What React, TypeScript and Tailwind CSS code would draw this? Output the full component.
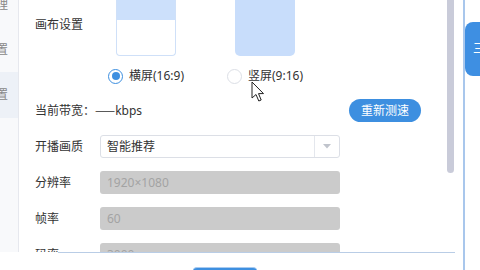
const FONT = "font-['Noto_Sans','Noto_Sans_CJK_SC',sans-serif]";

function Radio({ checked, label }: { checked?: boolean; label: string }) {
  return (
    <div className="flex h-[16px] items-center justify-center gap-[6px] whitespace-nowrap">
      {checked ? (
        <span className="flex h-[15px] w-[15px] shrink-0 items-center justify-center rounded-full border border-[#3d8fe0] bg-white">
          <span className="h-[8px] w-[8px] rounded-full bg-[#3d8fe0]" />
        </span>
      ) : (
        <span className="h-[15px] w-[15px] shrink-0 rounded-full border border-[#dcdfe6] bg-white" />
      )}
      <span className="text-[12px] leading-[16px] text-[#333]">{label}</span>
    </div>
  );
}

function FieldRow({ label, children }: { label: string; children: React.ReactNode }) {
  return (
    <div className="mt-[13px] flex h-[23px] shrink-0 items-center">
      <span className="w-[65px] shrink-0 text-[12px] text-[#333]">{label}</span>
      {children}
    </div>
  );
}

function DisabledInput({ value }: { value: string }) {
  return (
    <div className="flex h-[23px] w-[240px] items-center rounded-[3px] bg-[#cbcbcb] px-[7px] text-[12px] text-[#a3a3a3]">
      {value}
    </div>
  );
}

function Cursor() {
  return (
    <svg
      className="pointer-events-none absolute left-[251px] top-[81px]"
      width="14"
      height="22"
      viewBox="0 0 14 22"
    >
      <path
        d="M1 1 L1 17 L5 13.5 L7.8 20 L10.2 19 L7.5 12.6 L12.5 12.6 Z"
        fill="#fff"
        stroke="#222"
        strokeWidth="1"
        strokeLinejoin="round"
      />
    </svg>
  );
}

export default function App() {
  return (
    <div className={`relative flex h-[270px] w-[480px] overflow-hidden bg-white ${FONT}`}>
      {/* 左侧 + 主体 */}
      <div className="flex w-[455px] shrink-0 flex-col">
        <div className="flex h-[252px] shrink-0">
          {/* 侧栏（被裁切） */}
          <div className="flex w-[19px] shrink-0 flex-col overflow-hidden border-r border-[#e6e8ee] bg-[#f8f9fb] text-[12px] text-[#888]">
            <div className="-mt-[18px] flex h-[45px] items-center justify-end whitespace-nowrap pr-[10px]">推流管理</div>
            <div className="flex h-[45px] items-center justify-end whitespace-nowrap pr-[10px]">基础设置</div>
            <div className="flex h-[46px] items-center justify-end whitespace-nowrap bg-[#edf1f7] pr-[10px]">画面设置</div>
          </div>

          {/* 主体内容 */}
          <div className="flex flex-1 flex-col overflow-hidden pl-[16px] pr-[18px]">
            {/* 画布设置 */}
            <div className="flex shrink-0">
              <span className="w-[81px] shrink-0 pt-[17px] text-[12px] leading-[16px] text-[#333]">画布设置</span>
              <div className="flex gap-[59px]">
                <div className="flex w-[60px] flex-col">
                  <div className="flex h-[56px] flex-col overflow-hidden rounded-b-[4px] border border-t-0 border-[#cfe0f8] bg-white">
                    <div className="h-[20px] bg-[#cce0fb]" />
                  </div>
                  <div className="mt-[12px]">
                    <Radio checked label="横屏(16:9)" />
                  </div>
                </div>
                <div className="flex w-[60px] flex-col">
                  <div className="h-[56px] rounded-b-[5px] bg-[#c8ddfb]" />
                  <div className="mt-[12px]">
                    <Radio label="竖屏(9:16)" />
                  </div>
                </div>
              </div>
            </div>

            {/* 当前带宽 */}
            <div className="mt-[15px] flex h-[23px] shrink-0 items-center justify-between">
              <span className="whitespace-nowrap text-[12px] text-[#333]">
                当前带宽：<span className="font-['Noto_Sans_CJK_SC',sans-serif]">——</span>kbps
              </span>
              <button className="flex h-[23px] w-[72px] items-center justify-center rounded-full bg-[#3d8fe0] text-[12px] text-white">
                重新测速
              </button>
            </div>

            <FieldRow label="开播画质">
              <div className="flex h-[23px] w-[240px] items-stretch rounded-[3px] border border-[#dcdfe6] bg-white">
                <span className="flex flex-1 items-center px-[6px] text-[12px] text-[#333]">智能推荐</span>
                <span className="flex w-[25px] items-center justify-center border-l border-[#e4e7ed]">
                  <svg width="8" height="5" viewBox="0 0 8 5">
                    <path d="M0 0 L8 0 L4 4.5 Z" fill="#c0c4cc" />
                  </svg>
                </span>
              </div>
            </FieldRow>
            <FieldRow label="分辨率">
              <DisabledInput value="1920×1080" />
            </FieldRow>
            <FieldRow label="帧率">
              <DisabledInput value="60" />
            </FieldRow>
            <FieldRow label="码率">
              <DisabledInput value="3000" />
            </FieldRow>
          </div>

          {/* 滚动条 */}
          <div className="w-[16px] shrink-0 pl-[8px]">
            <div className="h-[173px] w-[7px] rounded-b-[4px] bg-[#c9cbd9]" />
          </div>
        </div>

        <div className="ml-[58px] h-px shrink-0 bg-[#b9cde6]" />

        {/* 底部按钮 */}
        <div className="flex flex-1 items-end">
          <div className="-mb-[6px] ml-[193px] h-[9px] w-[64px] shrink-0 rounded-t-[4px] border-t border-[#a9cbf0] bg-[#3d8fe0]" />
        </div>
      </div>

      {/* 右侧面板 */}
      <div className="flex min-w-0 flex-1 overflow-hidden">
        <div className="ml-[8px] w-[2px] shrink-0 bg-[#a9c7ec]" />
        <div className="min-w-0 flex-1 pt-[22px]">
          <div className="flex h-[54px] items-center overflow-hidden whitespace-nowrap rounded-l-[8px] bg-[#3e8fe2] pl-[8px] text-[12px] text-white">
            <span className="leading-none">三</span>
          </div>
        </div>
      </div>

      <Cursor />
    </div>
  );
}
